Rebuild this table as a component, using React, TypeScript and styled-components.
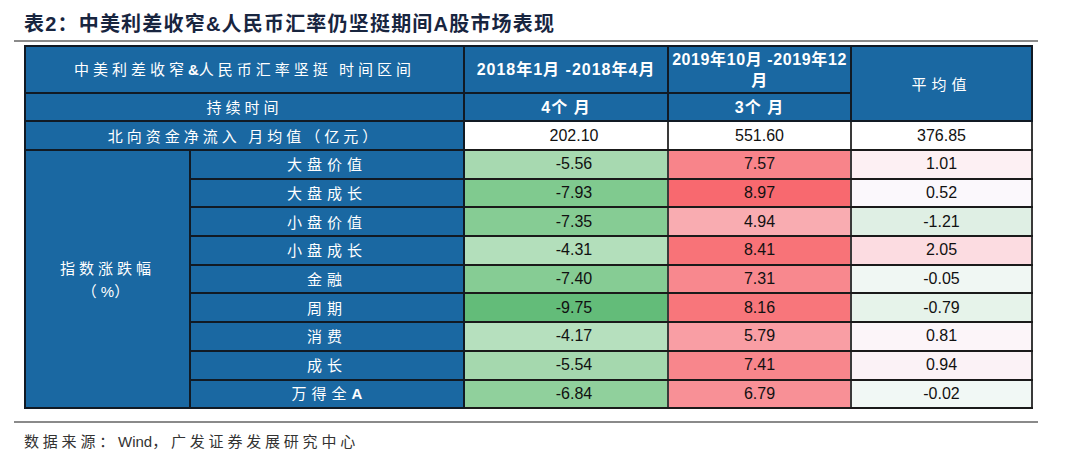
import React from "react"
import styled, { createGlobalStyle } from "styled-components"

const GlobalStyle = createGlobalStyle`
  html, body {
    margin: 0;
    padding: 0;
    background: #ffffff;
  }
  body {
    font-family: "Liberation Sans", "Noto Sans CJK SC", sans-serif;
  }
`

const BLUE = "#1a68a2"

const Page = styled.div`
  width: 1080px;
  height: 457px;
  padding: 0 42px 0 14px;
  box-sizing: border-box;
`

const Title = styled.h1`
  margin: 0;
  height: 40px;
  padding-left: 10px;
  display: flex;
  align-items: center;
  padding-top: 4px;
  box-sizing: border-box;
  font-family: "Liberation Sans", "Noto Sans CJK SC", sans-serif;
  font-size: 20px;
  font-weight: 700;
  color: #18253f;
  letter-spacing: 1.2px;
`

const Rule = styled.div`
  height: 2px;
  background: #8a8a8a;
`

const TableWrap = styled.div`
  padding: 3px 0 0 10px;
  height: 379px;
  box-sizing: border-box;
`

const Table = styled.table`
  border-collapse: collapse;
  table-layout: fixed;
  width: 1007px;
  border: 2px solid #222;
`

const Row = styled.tr<{ $h: number }>`
  height: ${(p) => p.$h}px;
`

const Head = styled.td<{ $spacing?: number; $bold?: boolean }>`
  background: ${BLUE};
  color: #ffffff;
  border: 2px solid #111a24;
  padding: 0;
  text-align: center;
  vertical-align: middle;
  font-family: "Noto Sans CJK SC", sans-serif;
  font-size: 15px;
  line-height: 20px;
  letter-spacing: ${(p) => p.$spacing ?? 3}px;
  font-weight: ${(p) => (p.$bold ? 700 : 400)};
`

const NumHead = styled(Head)`
  font-family: "Liberation Sans", "Noto Sans CJK SC", sans-serif;
  font-size: 16px;
  font-weight: 700;
  letter-spacing: ${(p) => p.$spacing ?? 1}px;
  line-height: 21px;
  white-space: nowrap;
`

const Cell = styled.td<{ $bg: string; $indent?: boolean }>`
  background: ${(p) => p.$bg};
  color: #111;
  border: 2px solid #3a3a3a;
  border-top-color: #1a1a1a;
  border-bottom-color: #1a1a1a;
  padding: 0 0 0 ${(p) => (p.$indent ? 16 : 0)}px;
  text-align: center;
  vertical-align: middle;
  font-family: "Liberation Sans", sans-serif;
  font-size: 16px;
`

const Footer = styled.div`
  padding: 8px 0 0 10px;
  font-family: "Noto Sans CJK SC", sans-serif;
  font-size: 15px;
  color: #333;
  letter-spacing: 3.8px;
  line-height: 20px;
`

const Latin = styled.span<{ $bold?: boolean }>`
  font-family: "Liberation Sans", sans-serif;
  font-weight: ${(p) => (p.$bold ? 700 : 400)};
  letter-spacing: 0;
`

type DataRow = { name: string; a: string; aBg: string; b: string; bBg: string; c: string; cBg: string }

const rows: DataRow[] = [
  { name: "大盘价值", a: "-5.56", aBg: "#a7d9b0", b: "7.57", bBg: "#f8848a", c: "1.01", cBg: "#fdf0f3" },
  { name: "大盘成长", a: "-7.93", aBg: "#80ca8f", b: "8.97", bBg: "#f8696f", c: "0.52", cBg: "#fbf8fc" },
  { name: "小盘价值", a: "-7.35", aBg: "#86cc94", b: "4.94", bBg: "#f9acb1", c: "-1.21", cBg: "#dfefe4" },
  { name: "小盘成长", a: "-4.31", aBg: "#b3dfbb", b: "8.41", bBg: "#f87378", c: "2.05", cBg: "#fcdce1" },
  { name: "金融", a: "-7.40", aBg: "#86cc94", b: "7.31", bBg: "#f8888e", c: "-0.05", cBg: "#f0f7f3" },
  { name: "周期", a: "-9.75", aBg: "#63bc79", b: "8.16", bBg: "#f8767b", c: "-0.79", cBg: "#e6f3ea" },
  { name: "消费", a: "-4.17", aBg: "#b6e0be", b: "5.79", bBg: "#f99ea4", c: "0.81", cBg: "#fcf5f9" },
  { name: "成长", a: "-5.54", aBg: "#a5d8ae", b: "7.41", bBg: "#f8868c", c: "0.94", cBg: "#fbf2f6" },
  { name: "万得全A", a: "-6.84", aBg: "#90d09c", b: "6.79", bBg: "#f89096", c: "-0.02", cBg: "#f1f8f5" },
]

// trailing Latin letter in a label gets the bold Arial look of the source
const renderLabel = (name: string) => {
  const m = name.match(/^(.*?)([A-Za-z]+)$/)
  if (!m) return name
  return (
    <>
      {m[1]}
      <Latin $bold>{m[2]}</Latin>
    </>
  )
}

const App = () => {
  return (
    <Page>
      <GlobalStyle />
      <Title>
        表2：中美利差收窄&amp;人民币汇率仍坚挺期间A股市场表现
      </Title>
      <Rule />
      <TableWrap>
        <Table>
          <colgroup>
            <col style={{ width: 165 }} />
            <col style={{ width: 274 }} />
            <col style={{ width: 204 }} />
            <col style={{ width: 183 }} />
            <col style={{ width: 181 }} />
          </colgroup>
          <tbody>
            <Row $h={47}>
              <Head colSpan={2} $spacing={4}>
                中美利差收窄<Latin $bold>&amp;</Latin>人民币汇率坚挺 时间区间
              </Head>
              <NumHead>2018年1月 -2018年4月</NumHead>
              <NumHead $spacing={0.6}>
                2019年10月 -2019年12
                <br />月
              </NumHead>
              <Head rowSpan={2} $spacing={5}>
                平均值
              </Head>
            </Row>
            <Row $h={28}>
              <Head colSpan={2} $spacing={4}>
                持续时间
              </Head>
              <NumHead>4个 月</NumHead>
              <NumHead>3个 月</NumHead>
            </Row>
            <Row $h={29}>
              <Head colSpan={2} $spacing={4}>
                北向资金净流入 月均值（亿元）
              </Head>
              <Cell $bg="#ffffff" $indent>
                202.10
              </Cell>
              <Cell $bg="#ffffff">551.60</Cell>
              <Cell $bg="#ffffff">376.85</Cell>
            </Row>
            {rows.map((r, i) => (
              <Row $h={28.7} key={r.name}>
                {i === 0 && (
                  <Head rowSpan={rows.length} $spacing={4} style={{ lineHeight: "23px" }}>
                    指数涨跌幅
                    <br />（<Latin>%</Latin>）
                  </Head>
                )}
                <Head $spacing={5}>{renderLabel(r.name)}</Head>
                <Cell $bg={r.aBg} $indent>
                  {r.a}
                </Cell>
                <Cell $bg={r.bBg}>{r.b}</Cell>
                <Cell $bg={r.cBg}>{r.c}</Cell>
              </Row>
            ))}
          </tbody>
        </Table>
      </TableWrap>
      <Rule />
      <Footer>
        数据来源：<Latin>Wind</Latin>，广发证券发展研究中心
      </Footer>
    </Page>
  )
}

export default App
